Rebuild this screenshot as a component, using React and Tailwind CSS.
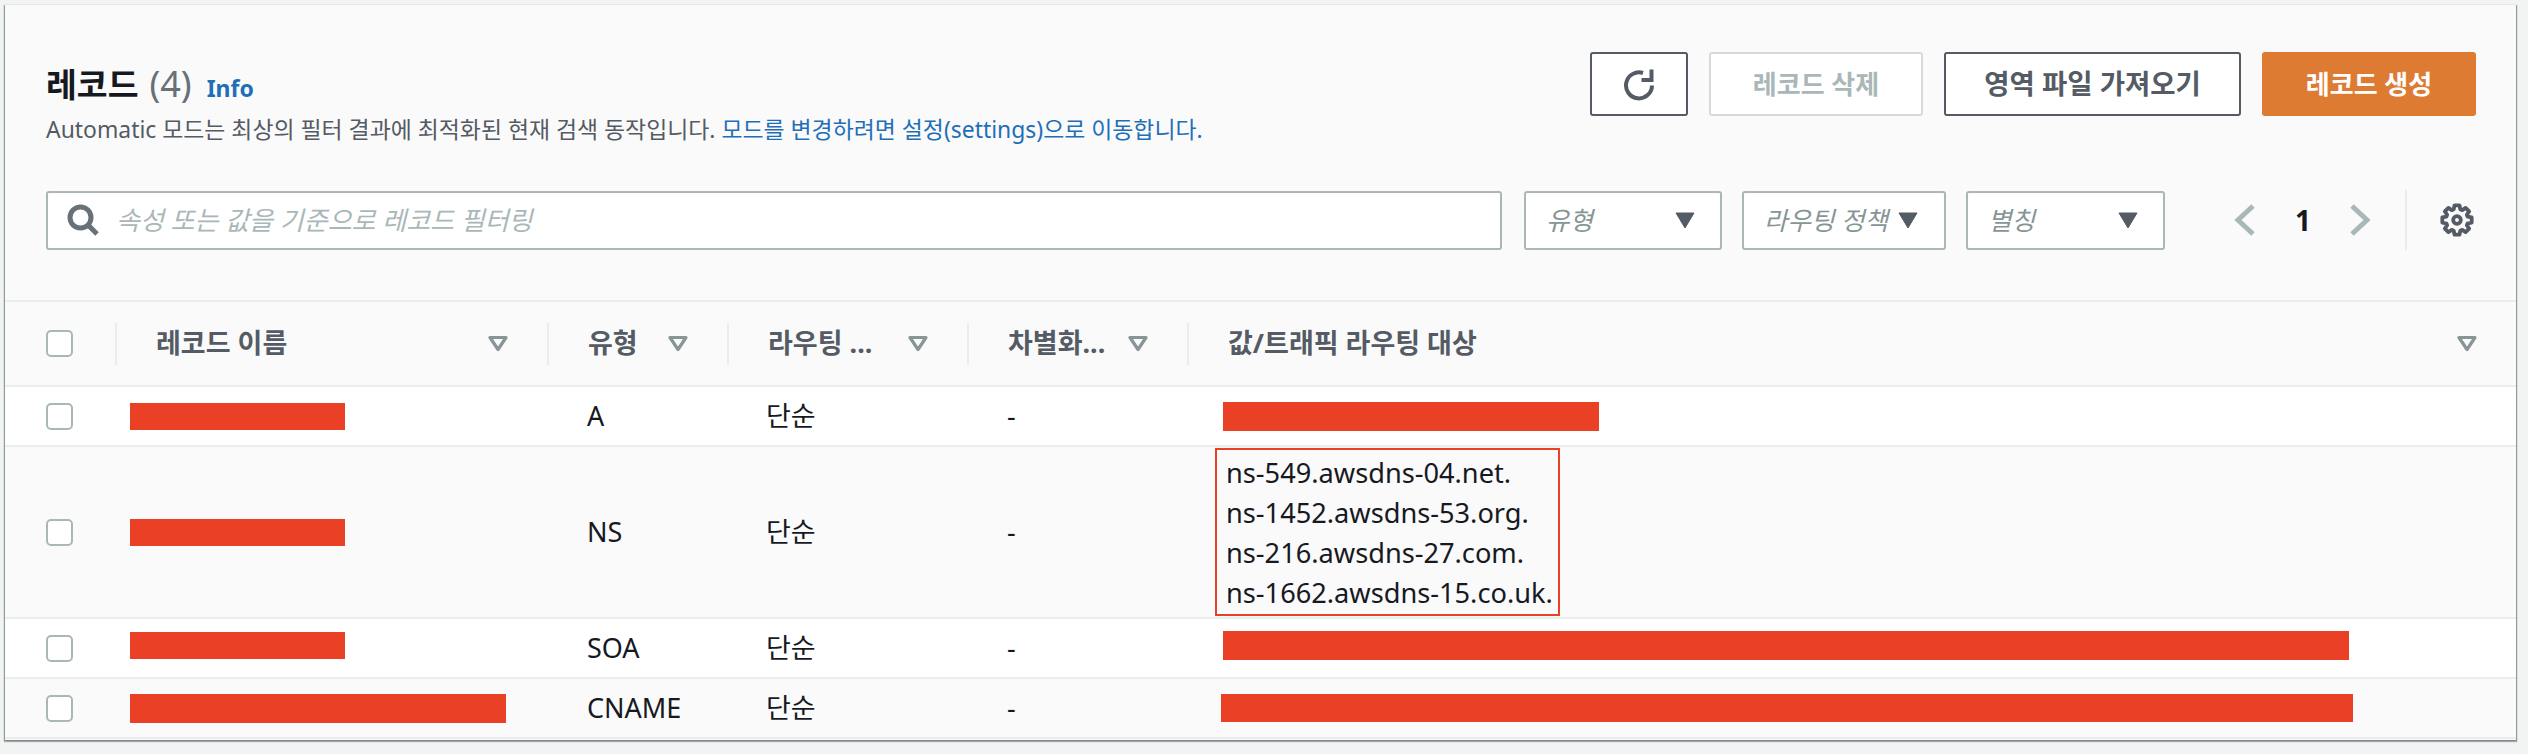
const font = { fontFamily: '"Noto Sans", "Noto Sans CJK KR", sans-serif' };

const COLS = 'grid grid-cols-[110px_432px_180px_240px_220px_1fr]';

// 8 tooth gear outline, centre 16,16
const gearPath = Array.from({ length: 8 }, (_, i) => {
  const a = (i * Math.PI) / 4;
  const pt = (r, d) => {
    const t = a + d;
    return `${(16 + r * Math.cos(t)).toFixed(2)} ${(16 + r * Math.sin(t)).toFixed(2)}`;
  };
  return `${i === 0 ? 'M' : 'L'}${pt(10.5, -0.3)}L${pt(14, -0.17)}L${pt(14, 0.17)}L${pt(10.5, 0.3)}`;
}).join('') + 'Z';

const Checkbox = () => (
  <div className="ml-[41px] w-[27px] h-[27px] rounded-[5px] border-2 border-[#aab7b8] bg-white" />
);

const FilterIcon = () => (
  <svg width="20" height="17" viewBox="0 0 20 17" className="shrink-0">
    <path d="M2 2.5h16L10 14.5z" fill="none" stroke="#879596" strokeWidth="3.2" strokeLinejoin="round" />
  </svg>
);

const Caret = () => (
  <svg width="20" height="17" viewBox="0 0 20 17" className="shrink-0">
    <path d="M1 1h18L10 16z" fill="#545b64" stroke="#545b64" strokeWidth="1" strokeLinejoin="round" />
  </svg>
);

const HeaderCell = ({ label }) => (
  <div className="relative flex items-center justify-between pl-[41px] pr-[39px]">
    <span className="absolute left-0 top-[21px] h-[42px] w-[2px] bg-[#eaeded]" />
    <span className="text-[27px] font-bold text-[#545b64] whitespace-nowrap">{label}</span>
    <FilterIcon />
  </div>
);

const Redact = ({ className }) => <div className={`bg-[#ea4026] ${className}`} />;

const Row = ({ className, name, type, value }) => (
  <div className={`${COLS} border-b-2 border-[#eaeded] text-[27px] text-[#16191f] ${className}`}>
    <div className="flex items-center"><Checkbox /></div>
    <div className="flex items-center pl-[15px]">{name}</div>
    <div className="flex items-center pl-[40px]">{type}</div>
    <div className="flex items-center pl-[39px]">단순</div>
    <div className="flex items-center pl-[40px]">-</div>
    <div className="flex items-center">{value}</div>
  </div>
);

const Select = ({ label, width }) => (
  <div className={`flex items-center justify-between h-[59px] rounded-[3px] border-2 border-[#aab7b8] bg-white pl-[20px] pr-[25px] ${width}`}>
    <span className="text-[25.5px] italic text-[#879596] whitespace-nowrap">{label}</span>
    <Caret />
  </div>
);

export default function App() {
  return (
    <div className="w-[2528px] h-[754px] bg-[#f2f3f3] pt-[5px] pl-[5px]" style={font}>
      <div className="w-[2511px] h-[735px] bg-[#fafafa] shadow-[0_1px_1px_1px_rgba(0,28,36,0.3),1px_1px_1px_0_rgba(0,28,36,0.15),-1px_1px_1px_0_rgba(0,28,36,0.15)] overflow-hidden">
        <div className="h-[297px] border-b-2 border-[#eaeded] pl-[41px] pr-[40px] pt-[47px]">
          <div className="flex justify-between h-[64px]">
            <div>
              <div className="flex items-baseline h-[44px] mt-[10px]">
                <h1 className="text-[33.5px] font-bold text-[#16191f] leading-[44px]">레코드</h1>
                <span className="ml-[11px] text-[36px] text-[#687078] leading-[44px]">(4)</span>
                <a className="ml-[15px] text-[23px] font-bold text-[#1f6fb8]">Info</a>
              </div>
              <p className="mt-[8px] text-[22.9px] leading-[32px] text-[#545b64]">
                Automatic 모드는 최상의 필터 결과에 최적화된 현재 검색 동작입니다.{' '}
                <a className="text-[#1f6fb8]">모드를 변경하려면 설정(settings)으로 이동합니다.</a>
              </p>
            </div>
            <div className="flex gap-[21px] h-[64px] text-[26px] font-bold">
              <button className="w-[98px] flex items-center justify-center rounded-[3px] border-2 border-[#545b64] bg-white">
                <svg width="34" height="34" viewBox="0 0 34 34" fill="none">
                  <path d="M30 18.5A13 13 0 1 1 21 6" stroke="#545b64" strokeWidth="4" />
                  <path d="M27.5 2.5h4v12.5h-12v-4h8z" fill="#545b64" />
                </svg>
              </button>
              <button className="w-[214px] rounded-[3px] border-2 border-[#d5dbdb] bg-white text-[#aab7b8]">레코드 삭제</button>
              <button className="w-[297px] rounded-[3px] border-2 border-[#545b64] bg-white text-[#545b64] text-[27.5px]">영역 파일 가져오기</button>
              <button className="w-[214px] rounded-[3px] bg-[#de7b33] text-white">레코드 생성</button>
            </div>
          </div>
          <div className="flex items-center mt-[74px]">
            <div className="flex-1 flex items-center h-[59px] rounded-[3px] border-2 border-[#aab7b8] bg-white pl-[18px]">
              <svg width="34" height="34" viewBox="0 0 34 34" fill="none">
                <circle cx="14.5" cy="14.5" r="10.5" stroke="#687078" strokeWidth="5" />
                <path d="M22 22l9 9" stroke="#687078" strokeWidth="5" />
              </svg>
              <span className="ml-[16px] text-[26px] italic text-[#aab7b8]">속성 또는 값을 기준으로 레코드 필터링</span>
            </div>
            <div className="flex gap-[20px] ml-[22px]">
              <Select label="유형" width="w-[198px]" />
              <Select label="라우팅 정책" width="w-[204px] !pr-[26px]" />
              <Select label="별칭" width="w-[199px]" />
            </div>
            <div className="flex items-center w-[311px] h-[60px]">
              <svg width="24" height="32" viewBox="0 0 24 32" fill="none" className="ml-[68px]">
                <path d="M20 2L5 16l15 14" stroke="#aab7b8" strokeWidth="5" />
              </svg>
              <span className="ml-[38px] w-[20px] text-[28px] font-bold text-[#16191f]">1</span>
              <svg width="24" height="32" viewBox="0 0 24 32" fill="none" className="ml-[33px]">
                <path d="M4 2l15 14L4 30" stroke="#aab7b8" strokeWidth="5" />
              </svg>
              <span className="ml-[33px] w-[2px] h-[60px] bg-[#eaeded]" />
              <svg width="34" height="34" viewBox="0 0 32 32" fill="none" stroke="#545b64" className="ml-[33px]">
                <path d={gearPath} strokeWidth="3.6" strokeLinejoin="round" />
                <circle cx="16" cy="16" r="3.6" strokeWidth="3.6" />
              </svg>
            </div>
          </div>
        </div>

        <div className={`${COLS} h-[85px] border-b-2 border-[#eaeded]`}>
          <div className="flex items-center"><Checkbox /></div>
          <HeaderCell label="레코드 이름" />
          <HeaderCell label="유형" />
          <HeaderCell label="라우팅 ..." />
          <HeaderCell label="차별화..." />
          <HeaderCell label="값/트래픽 라우팅 대상" />
        </div>

        <Row
          className="h-[60px] bg-white"
          type="A"
          name={<Redact className="w-[215px] h-[27px]" />}
          value={<Redact className="ml-[36px] w-[376px] h-[29px]" />}
        />
        <Row
          className="h-[172px]"
          type="NS"
          name={<Redact className="w-[215px] h-[27px]" />}
          value={
            <div className="ml-[28px] mt-[-1px] w-[345px] h-[168px] border-2 border-[#ea4026] pl-[9px] pt-[3px] text-[27.2px] leading-[40px] whitespace-nowrap">
              <div>ns-549.awsdns-04.net.</div>
              <div>ns-1452.awsdns-53.org.</div>
              <div>ns-216.awsdns-27.com.</div>
              <div>ns-1662.awsdns-15.co.uk.</div>
            </div>
          }
        />
        <Row
          className="h-[60px] bg-white"
          type="SOA"
          name={<Redact className="w-[215px] h-[27px] mb-[6px]" />}
          value={<Redact className="ml-[36px] w-[1126px] h-[29px] mb-[6px]" />}
        />
        <Row
          className="h-[60px]"
          type="CNAME"
          name={<Redact className="w-[376px] h-[29px]" />}
          value={<Redact className="ml-[34px] w-[1132px] h-[28px]" />}
        />
      </div>
    </div>
  );
}
